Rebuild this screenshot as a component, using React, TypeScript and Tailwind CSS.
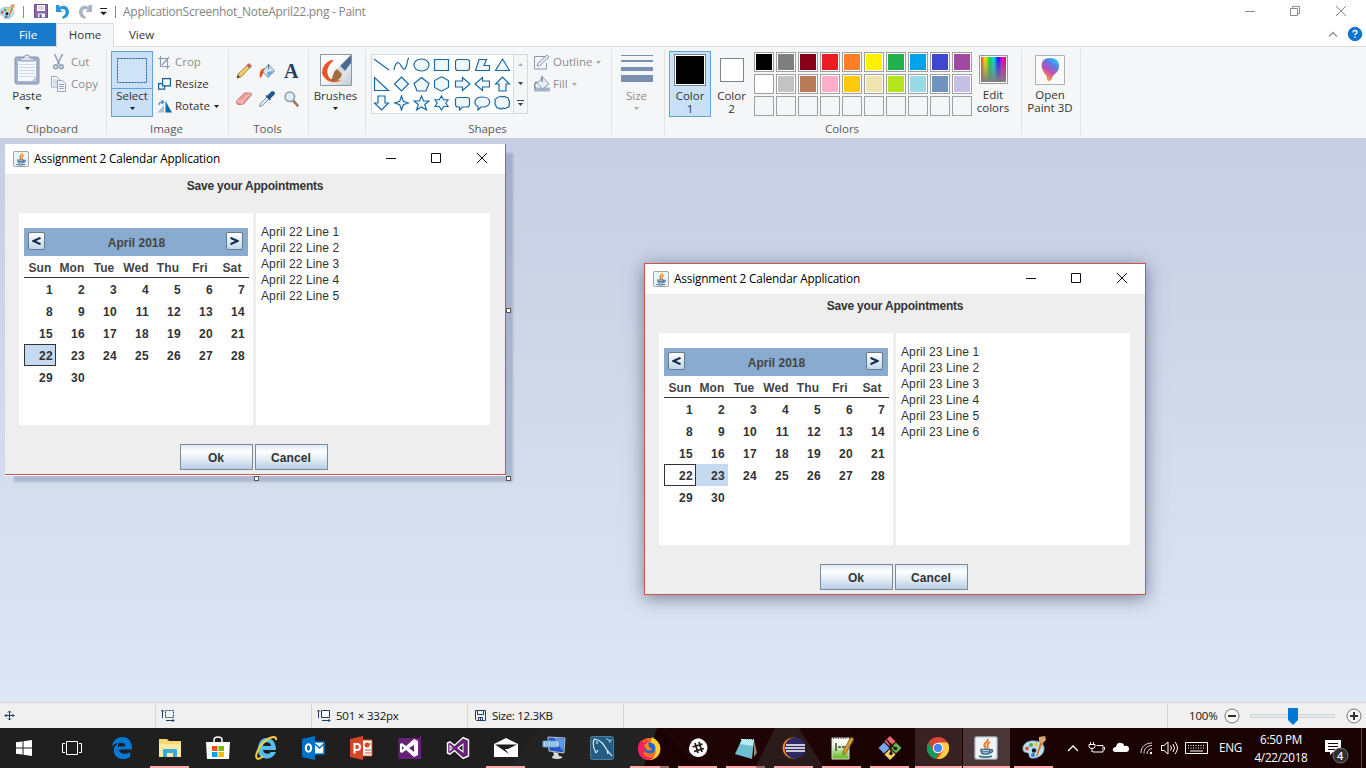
import React from 'react';

type Kids = { children?: React.ReactNode };
const UI = "font-['Open_Sans','Noto_Sans',sans-serif]";

/* ---------- shared bits ---------- */

function Caret({ className = 'fill-[#222]' }: { className?: string }) {
  return (
    <svg width="5" height="3" viewBox="0 0 5 3" className={`block shrink-0 ${className}`}>
      <path d="M0 0h5L2.500 3z" />
    </svg>
  );
}

function PaletteIcon({ size }: { size: number }) {
  return (
    <svg width={size} height={size} viewBox="0 0 24 24">
      <path d="M1 14C0 8 6 4 13 5c6 0 10 4 9 9-1 6-8 9-13 8-3-1-1-4-3-5s-4 0-5-3z" fill="#b9def0" stroke="#6a9fc0" strokeWidth="0.800" />
      <circle cx="5" cy="12.500" r="2" fill="#e1524a" />
      <circle cx="9" cy="9" r="2" fill="#5aa845" />
      <circle cx="14" cy="8.500" r="2" fill="#f1c73c" />
      <circle cx="12" cy="14.500" r="2.200" fill="#1b1b1b" />
      <circle cx="11" cy="19" r="2" fill="#3f76c9" />
      <path d="M20 2l3 1-4 8-4 10-1-1 3-10z" fill="#d07a2b" />
      <path d="M17 1l6-1 1 4-4 4-3-3z" fill="#d9a872" />
    </svg>
  );
}

function JavaIcon({ size }: { size: number }) {
  return (
    <svg width={size} height={size} viewBox="0 0 24 24">
      <rect x="0.700" y="0.700" width="22.600" height="22.600" rx="2" fill="#eef3f6" stroke="#8796a1" strokeWidth="1.300" />
      <path d="M13.500 3c2 3-5 4-3 7 1 1 1 2 1 3M16 6c-4 2-2 4-2.500 7" fill="none" stroke="#e87820" strokeWidth="1.800" />
      <path d="M7 13.500h9c0 3-1 4-2 4.500H9c-1-.5-2-2-2-4.500zM16 14c4-1 3 3-1 3M5 20c3 1.500 10 1.500 13 0" fill="none" stroke="#3f6c90" strokeWidth="1.600" />
      <path d="M8 15.800h7" stroke="#3f6c90" strokeWidth="1.300" />
    </svg>
  );
}

/* ---------- title bar and tabs ---------- */

function TitleBar() {
  return (
    <div className="flex h-[23px] items-center bg-white">
      <div className="-ml-px w-[16px] shrink-0"><PaletteIcon size={16} /></div>
      <div className="ml-[8px] h-[12px] w-px bg-[#888]" />
      <svg className="ml-[10px]" width="15" height="15" viewBox="0 0 15 15">
        <path d="M0.500 0.500h13v13h-13z" fill="#8a69ad" stroke="#654b8c" />
        <path d="M3 1h8v6H3z" fill="#fff" />
        <path d="M4 3h6M4 5h6" stroke="#b9aacb" />
        <path d="M4 9.500h7v4H4z" fill="#f3f0f7" />
        <path d="M5.500 10.500h2v3h-2z" fill="#5d447f" />
      </svg>
      <svg className="ml-[7px]" width="14" height="15" viewBox="0 0 14 15">
        <path d="M0 1h3.500v2c5-3 9.500 0 9.500 5 0 4-3 6-6 7 0-1-.5-1-1-2 2-1 3.500-3 3.500-5 0-3-3-3.500-5-2.500l2 2.500H0z" fill="#2b96d9" />
      </svg>
      <svg className="ml-[8px]" width="14" height="15" viewBox="0 0 14 15">
        <path d="M14 1h-3.500v2C5.500 0 1 3 1 8c0 4 3 6 6 7 0-1 .5-1 1-2-2-1-3.500-3-3.500-5 0-3 3-3.500 5-2.500l-2 2.500H14z" fill="#a8b4c6" />
      </svg>
      <svg className="ml-[8px]" width="7" height="8" viewBox="0 0 7 8">
        <path d="M0 0.500h7" stroke="#222" /><path d="M0.500 4h6L3.500 7z" fill="#222" stroke="#222" strokeWidth="0.500" />
      </svg>
      <div className="ml-[8px] h-[12px] w-px bg-[#888]" />
      <span className="ml-[7px] text-[12px] tracking-[-0.275px] text-[#858585]">ApplicationScreenhot_NoteApril22.png - Paint</span>
      <svg className="ml-auto" width="122" height="22" viewBox="0 0 122 22" fill="none" stroke="#8c8c8c">
        <path d="M1 10.500h10M46.500 7.500h7v7h-7zM48.500 7.500v-2h7v7h-2M92 5l10 10M102 5l-10 10" />
      </svg>
    </div>
  );
}

function Tabs() {
  return (
    <div className="flex h-[24px] border-b border-[#dadbdc] bg-white text-[11.500px]">
      <div className="flex w-[56px] items-center justify-center bg-[#1979ca] text-white">File</div>
      <div className="-mb-px flex w-[58px] items-center justify-center border-x border-t border-[#dadbdc] bg-[#f5f6f7] pb-[2px] text-[#333]">Home</div>
      <div className="flex w-[55px] items-center justify-center text-[#333]">View</div>
      <svg className="ml-auto" width="48" height="23" viewBox="0 0 48 23">
        <path d="M11 13.500l4-4 4 4" fill="none" stroke="#929292" strokeWidth="1.300" />
        <circle cx="37" cy="11" r="6.800" fill="#0b73d3" stroke="#0758a8" strokeWidth="0.700" />
        <path d="M35 9.500q0-2 2-2t2 1.700q0 1-1 1.500t-1 1.600M37 13.600v1.300" fill="none" stroke="#fff" strokeWidth="1.300" />
      </svg>
    </div>
  );
}

/* ---------- ribbon ---------- */

function Group({ label, width, children }: { label?: string; width: string } & Kids) {
  return (
    <div className={`flex shrink-0 ${width}`}>
      <div className="flex min-w-0 flex-1 flex-col">
        <div className="flex h-[74px] pt-[4px]">{children}</div>
        <div className="flex h-[15px] items-center justify-center pr-[2px] text-[11.500px] text-[#5a5a5a]">{label}</div>
      </div>
      <div className="mt-[2px] h-[86px] w-px bg-[#e2e3e4]" />
    </div>
  );
}

function BigLabel({ children, dim }: Kids & { dim?: boolean }) {
  return <span className={`text-[11.500px] leading-[13px] whitespace-nowrap ${dim ? 'text-[#8d8d8d]' : 'text-[#333]'}`}>{children}</span>;
}

function SmallRow({ icon, text, dim, caret, gutter = 'w-[20px]' }: { icon: React.ReactNode; text: string; dim?: boolean; caret?: boolean; gutter?: string }) {
  return (
    <div className="flex h-[22px] items-center">
      <div className={`flex shrink-0 items-center ${gutter}`}>{icon}</div>
      <span className={`text-[11.500px] whitespace-nowrap ${dim ? 'text-[#8d8d8d]' : 'text-[#333]'}`}>{text}</span>
      {caret && <span className="ml-[4px]"><Caret className={dim ? 'fill-[#a9a9a9]' : 'fill-[#222]'} /></span>}
    </div>
  );
}

function Clipboard() {
  return (
    <Group label="Clipboard" width="w-[107px]">
      <div className="ml-[6px] flex w-[42px] flex-col items-center pt-[3px]">
        <svg width="26" height="31" viewBox="0 0 26 31">
          <rect x="1" y="3" width="24" height="27" rx="2" fill="#a4b0c7" stroke="#8795b2" />
          <path d="M4 7h18v20H4z" fill="#f5f8fc" />
          <path d="M5 10.500h16M5 13.500h16M5 16.500h16M5 19.500h16M5 22.500h16" stroke="#cfd9e8" />
          <path d="M18 27l4-5v5z" fill="#c5cede" />
          <path d="M6 7V4h4c0-4 6-4 6 0h4v3z" fill="#d9e0ec" stroke="#8795b2" />
        </svg>
        <div className="mt-[4px] flex h-[13px] items-center"><BigLabel>Paste</BigLabel></div>
        <div className="mt-[5px]"><Caret /></div>
      </div>
      <div className="ml-[3px]">
        <SmallRow dim text="Cut" icon={
          <svg className="ml-[2px]" width="11" height="16" viewBox="0 0 11 16" fill="none" stroke="#97a3bb" strokeWidth="1.700">
            <path d="M1.500 0l5 10.500M9.500 0l-5 10.500" /><circle cx="2.700" cy="12.700" r="1.900" /><circle cx="8.300" cy="12.700" r="1.900" />
          </svg>} />
        <SmallRow dim text="Copy" icon={
          <svg width="16" height="16" viewBox="0 0 16 16" fill="#f1f4f9" stroke="#9aa7c0">
            <path d="M0.500 0.500h5l3 3v7.500h-8z" /><path d="M2 4h4M2 6h4M2 8h4" stroke="#bcc6d8" />
            <path d="M6.500 4.500h5l3 3v8h-8z" /><path d="M8 8.500h5M8 10.500h5M8 12.500h5" />
          </svg>} />
      </div>
    </Group>
  );
}

function ImageGroup() {
  return (
    <Group label="Image" width="w-[122px]">
      <div className="ml-[4px] flex h-[66px] w-[42px] flex-col items-center border border-[#62a2e4] bg-[#c9e0f7]">
        <div className="flex h-[37px] w-full items-center justify-center border-b border-[#62a2e4]">
          <svg width="31" height="25" viewBox="0 0 31 25"><rect x="0.500" y="0.500" width="29" height="24" fill="#cfe3f7" stroke="#1b5b95" strokeDasharray="2 1" /></svg>
        </div>
        <div className="flex h-[13px] items-center"><BigLabel>Select</BigLabel></div>
        <div className="mt-[5px]"><Caret /></div>
      </div>
      <div className="ml-[5px] w-[70px]">
        <SmallRow dim gutter="w-[17px]" text="Crop" icon={
          <svg width="12" height="13" viewBox="0 0 12 13" fill="none" stroke="#8f9bb3" strokeWidth="1.200">
            <path d="M2.500 0v10.500H12M0 2.500h9.500V13M4 9l7-8" />
          </svg>} />
        <SmallRow gutter="w-[17px]" text="Resize" icon={
          <svg width="13" height="12" viewBox="0 0 13 12" fill="#f7fbff" stroke="#155a99" strokeWidth="1.200">
            <path d="M0.600 5.600h6v5.500h-6z" /><path d="M4.600 0.600h7.800v7.300H4.600z" />
          </svg>} />
        <SmallRow gutter="w-[17px]" text="Rotate" caret icon={
          <svg className="-ml-px" width="16" height="13" viewBox="0 0 16 13">
            <path d="M7 5v7.500H0.500z" fill="#b4bfca" /><path d="M8.500 1l6.500 11.500H8.500z" fill="#176a9f" /><path d="M2 5c0-2 1-3 4-3M4.500 0l2 2-2 2" fill="none" stroke="#2b89da" strokeWidth="1.200" />
          </svg>} />
      </div>
    </Group>
  );
}

const tools = [
  <svg key="p" width="16" height="16" viewBox="0 0 16 16"><path d="M1 15l1-4L11.500 2l2.500 2.500L5 14z" fill="#f2cc61" stroke="#8d703a" strokeWidth="0.800" /><path d="M11 2.500L13 0.500l2.500 2.500-2 2z" fill="#d2605c" stroke="#8e3b36" strokeWidth="0.500" /><path d="M1 15l.8-3L4 14z" fill="#333" /></svg>,
  <svg key="b" width="17" height="16" viewBox="0 0 17 16"><path d="M3.500 8.500l6-7 6 6.500-6.500 6.500z" fill="#d3e5f3" stroke="#6f8fae" /><path d="M8 9l7-1-6 6z" fill="#6fa6d4" /><path d="M9.500 1v5" stroke="#577" /><path d="M1 15C0 10 1 6 6 5 4 8 4.500 11 2.500 14z" fill="#e9571c" /></svg>,
  <span key="a" className="font-['Liberation_Serif',serif] text-[20px] leading-[16px] font-bold text-[#1f3d64]">A</span>,
  <svg key="e" width="16" height="14" viewBox="0 0 16 14"><path d="M0.500 9l8-8q1-.6 2 0h4.500q.8.500 0 2.500l-8 9H2.500q-2 0-2-3.500z" fill="#ef9d98" stroke="#b9605c" strokeWidth="0.800" /><path d="M0.500 9h5.500l9-8.500M6 9v4" fill="none" stroke="#fbd2cf" /></svg>,
  <svg key="d" width="16" height="16" viewBox="0 0 16 16"><path d="M0.500 15.500l1-3L8 6l2 2-6.500 6.500z" fill="#d9ebf7" stroke="#63829c" strokeWidth="0.800" /><path d="M7 4.500L11.500 9M9 5l4-4q2.500-.5 2 2l-4 4z" fill="#24659c" stroke="#1f4f80" strokeWidth="1.500" /></svg>,
  <svg key="z" width="15" height="16" viewBox="0 0 15 16"><path d="M9.500 10l4 4.500" stroke="#9c7149" strokeWidth="2.600" strokeLinecap="round" /><circle cx="5.800" cy="5.800" r="4.800" fill="#dcecf7" stroke="#8b9ba8" strokeWidth="1.500" /></svg>,
];

function ToolsGroup() {
  return (
    <Group label="Tools" width="w-[80px]">
      <div className="ml-[3px] grid h-[62px] w-[71px] grid-cols-3 grid-rows-[28px_28px] items-center justify-items-center pt-[6px]">
        {tools.map((t, i) => <div key={i} className="flex items-center justify-center">{t}</div>)}
      </div>
    </Group>
  );
}

function BrushesGroup() {
  return (
    <Group width="w-[57px]">
      <div className="flex w-[53px] flex-col items-center pt-[3px]">
        <svg width="32" height="32" viewBox="0 0 32 32">
          <defs><linearGradient id="brushbg" x2="1" y2="1"><stop offset="0.400" stopColor="#fdfdfd" /><stop offset="1" stopColor="#bfcbd0" /></linearGradient></defs>
          <path d="M0.500 0.500h31v31H0.500z" fill="url(#brushbg)" stroke="#8c969b" />
          <path d="M14 6C8 5 2 12 2 19c2 8 12 12 19 7-6 1-12 0-13-5C6 15 9 11 14 6z" fill="#e95525" />
          <path d="M31 1v8l-6 8-5-5z" fill="#4b6b96" /><path d="M25 17l-5-5-3 3 4 5z" fill="#d5dbe1" />
          <path d="M17 15l5 5c-1 5-5 8-12 7 4-3 2-9 7-12z" fill="#a46d39" />
        </svg>
        <div className="mt-[3px] flex h-[13px] items-center"><BigLabel>Brushes</BigLabel></div>
        <div className="mt-[5px]"><Caret /></div>
      </div>
    </Group>
  );
}

const shapes = [
  'M1 2l15 11', 'M1 13C2 6 5 4 7 7s4 8 6 3 1-8 3-9', 'M8.500 2c10 0 10 12 0 12s-10-12 0-12z', 'M1.500 2.500h14v11h-14z', 'M4 2.500h9q2.500 0 2.500 2.500v6q0 2.500-2.500 2.500H4Q1.500 13.500 1.500 11V5Q1.500 2.500 4 2.500z', 'M5 2.500h7.500L10 8.500h5.500v5h-14z', 'M8.500 2l7 11.500h-14z',
  'M1.500 1.500v13h14z', 'M8.500 1l7 7-7 7-7-7z', 'M8.500 1.500l7.500 6-3 7.500H4L1 7.500z', 'M8.500 0.800l7 3.700v7l-7 3.700-7-3.700v-7z', 'M1.500 5h7V1.500L16 8l-7.500 6.500V11h-7z', 'M15.500 5h-7V1.500L1 8l7.500 6.500V11h7z', 'M5 15V8H1.500L8.500 1l7 7H12v7z',
  'M5 1v7H1.500l7 7 7-7H12V1z', 'M8.500 1l1.800 5.200L15.500 8l-5.200 1.800L8.500 15l-1.800-5.200L1.500 8l5.200-1.800z', 'M8.500 1l2 5h5.500l-4.300 3.500L13.500 15l-5-3-5 3 1.800-5.500L1 6h5.500z', 'M8.500 1l2.200 3.700H15L12.800 8l2.200 3.500h-4.300L8.500 15l-2.200-3.500H2L4.200 8 2 4.700h4.300z', 'M4 2.500h9q2.500 0 2.500 2v5q0 2.500-2.500 2.500H8.500l-3 3v-3H4q-2.500 0-2.500-2.500v-5q0-2 2.500-2z', 'M8.500 2c9.500 0 9.500 10 0 10H7l-3 3v-3.500C-1 9 0 2 8.500 2z', 'M5 2q1.500-1.500 3.500 0 2-1.500 3.500.5 3-.5 2.500 2.500 2 2 .5 4 1 3-2 3.500-1.500 2-4 .5-2 2-4 0-3 .5-3-2.500-2-1.500-.5-3.500Q0 4 2.500 3.500 3 2 5 2z',
];

function ShapesGroup() {
  return (
    <Group label="Shapes" width="w-[246px]">
      <div className="mt-[3px] ml-[5px] flex h-[60px] w-[157px] shrink-0 border border-[#d5d9de] bg-white">
        <div className="grid w-[141px] grid-cols-7 grid-rows-3 items-center justify-items-center">
          {shapes.map((d, i) => (
            <svg key={i} className="relative -left-[0.500px]" width="17" height="16" viewBox="0 0 17 16"><path d={d} fill={i < 2 ? 'none' : '#eef7fa'} stroke="#1a66a4" strokeWidth="1.150" /></svg>
          ))}
        </div>
        <div className="flex w-[14px] flex-col border-l border-[#d5d9de] bg-[#f5f6f7]">
          <div className="flex flex-1 items-center justify-center"><svg width="5" height="3" viewBox="0 0 5 3"><path d="M0 3h5L2.500 0z" fill="#adb1b7" /></svg></div>
          <div className="flex flex-1 items-center justify-center"><Caret className="fill-[#33415b]" /></div>
          <div className="flex flex-1 flex-col items-center justify-center gap-[2px]"><div className="h-px w-[7px] bg-[#33415b]" /><Caret className="fill-[#33415b]" /></div>
        </div>
      </div>
      <div className="ml-[6px]">
        <SmallRow dim caret gutter="w-[19px]" text="Outline" icon={
          <svg width="17" height="16" viewBox="0 0 17 16" fill="none" stroke="#8998b3"><path d="M12 2.500H0.500v12.500h12V9" /><path d="M3 12l1-3 9-8 2 2-9 8.500z" fill="#e5eaf3" /></svg>} />
        <SmallRow dim caret gutter="w-[19px]" text="Fill" icon={
          <svg width="17" height="16" viewBox="0 0 17 16"><path d="M0 11.500h16V15.500H0z" fill="#a5b2cb" /><path d="M3 7l6-5.500L15 8l-6.500 5z" fill="#e6ebf4" stroke="#8998b3" /><path d="M8 0v6M3 6C0 7 0 11 2 12" fill="none" stroke="#7c8cab" strokeWidth="1.500" /></svg>} />
      </div>
    </Group>
  );
}

function SizeGroup() {
  return (
    <Group width="w-[53px]">
      <div className="flex w-full flex-col items-center pt-[4px] pr-[3px]">
        <div className="h-px w-[32px] bg-[#7b8fb2]" />
        <div className="mt-[4px] h-[2px] w-[32px] bg-[#7b8fb2]" />
        <div className="mt-[5px] h-[4px] w-[32px] bg-[#7b8fb2]" />
        <div className="mt-[4px] h-[7px] w-[32px] bg-[#7b8fb2]" />
        <div className="mt-[7px] flex h-[13px] items-center"><BigLabel dim>Size</BigLabel></div>
        <div className="mt-[5px]"><Caret className="fill-[#a9a9a9]" /></div>
      </div>
    </Group>
  );
}

const palette = [
  'bg-[#000000]', 'bg-[#7f7f7f]', 'bg-[#880015]', 'bg-[#ed1c24]', 'bg-[#ff7f27]', 'bg-[#fff200]', 'bg-[#22b14c]', 'bg-[#00a2e8]', 'bg-[#3f48cc]', 'bg-[#a349a4]',
  'bg-[#ffffff]', 'bg-[#c3c3c3]', 'bg-[#b97a57]', 'bg-[#ffaec9]', 'bg-[#ffc90e]', 'bg-[#efe4b0]', 'bg-[#b5e61d]', 'bg-[#99d9ea]', 'bg-[#7092be]', 'bg-[#c8bfe7]',
  '', '', '', '', '', '', '', '', '', '',
];

function ColorsGroup() {
  return (
    <Group label="Colors" width="w-[357px]">
      <div className="ml-[4px] flex h-[66px] w-[42px] shrink-0 flex-col items-center border border-[#62a2e4] bg-[#c9e0f7] pt-[2px]">
        <div className="h-[32px] w-[32px] border border-[#7d8389] bg-white p-px"><div className="h-full w-full bg-black" /></div>
        <div className="mt-[3px] flex flex-col items-center"><BigLabel>Color</BigLabel><BigLabel>1</BigLabel></div>
      </div>
      <div className="flex w-[41px] shrink-0 flex-col items-center pt-[7px]">
        <div className="h-[24px] w-[24px] border border-[#7d8389] bg-white" />
        <div className="mt-[7px] flex flex-col items-center"><BigLabel>Color</BigLabel><BigLabel>2</BigLabel></div>
      </div>
      <div className="mt-px ml-[2px] grid h-[64px] shrink-0 grid-cols-10 gap-[2px]">
        {palette.map((c, i) => (
          <div key={i} className={`h-[20px] w-[20px] border border-[#a0a0a0] p-px ${c ? 'bg-white' : ''}`}><div className={`h-full w-full ${c}`} /></div>
        ))}
      </div>
      <div className="flex w-[42px] flex-col items-center pt-[4px]">
        <svg width="29" height="29" viewBox="0 0 29 29">
          <defs>
            <linearGradient id="spectrum"><stop stopColor="#f33" /><stop offset="0.170" stopColor="#fe0" /><stop offset="0.350" stopColor="#0d3" /><stop offset="0.520" stopColor="#0de" /><stop offset="0.680" stopColor="#11f" /><stop offset="0.850" stopColor="#e0e" /><stop offset="1" stopColor="#f02" /></linearGradient>
            <linearGradient id="fadeGray" x2="0" y2="1"><stop stopColor="#808080" stopOpacity="0" /><stop offset="1" stopColor="#808080" /></linearGradient>
          </defs>
          <path d="M0.500 0.500h28v28H0.500z" fill="#fff" stroke="#999" /><path d="M2 2h25v25H2z" fill="url(#spectrum)" /><path d="M2 2h25v25H2z" fill="url(#fadeGray)" />
        </svg>
        <div className="mt-[4px] flex flex-col items-center"><BigLabel>Edit</BigLabel><BigLabel>colors</BigLabel></div>
      </div>
    </Group>
  );
}

function Paint3DGroup() {
  return (
    <Group width="w-[59px]">
      <div className="flex w-[56px] flex-col items-center pt-[4px]">
        <svg width="30" height="30" viewBox="0 0 30 30">
          <defs><linearGradient id="p3d" x1="0.800" x2="0.200" y2="1"><stop stopColor="#24d6f4" /><stop offset="0.300" stopColor="#5a7ae9" /><stop offset="0.600" stopColor="#d14da5" /><stop offset="1" stopColor="#ffc021" /></linearGradient></defs>
          <path d="M0.500 0.500h29v29H0.500z" fill="#fafafa" stroke="#b0b0b0" />
          <path d="M15 3c10 0 11 9 7 14-3 3-4 3-5 6-1 4-5 4-5 1 0-4-2-4-4-8C5 9 7 3 15 3z" fill="url(#p3d)" />
          <path d="M9 7c1 4 4 7 9 9-4 1-8-1-10-4z" fill="#9b57e5" opacity="0.600" />
        </svg>
        <div className="mt-[3px] flex flex-col items-center"><BigLabel>Open</BigLabel><BigLabel>Paint 3D</BigLabel></div>
      </div>
    </Group>
  );
}

/* ---------- calendar window ---------- */

const weekdays = ['Sun', 'Mon', 'Tue', 'Wed', 'Thu', 'Fri', 'Sat'];

function NavButton({ flip }: { flip?: boolean }) {
  return (
    <div className="flex h-[18px] w-[17px] items-center justify-center rounded-[2px] border border-[#66798b] bg-linear-to-b from-white to-[#c2d6e8]">
      <svg className={flip ? '-scale-x-100' : ''} width="9" height="8" viewBox="0 0 9 8">
        <path d="M8.500 0.800L1.500 4l7 3.200" fill="none" stroke="#0d2c4e" strokeWidth="2" />
      </svg>
    </div>
  );
}

function JavaButton({ children }: Kids) {
  return (
    <div className="flex h-[26px] w-[73px] items-center justify-center border border-[#7a8a99] bg-linear-to-b from-[#dfeaf4] via-white via-30% to-[#b8cfe5] pt-[2px] pr-px text-[12px] font-bold tracking-[0.100px] text-[#333]">{children}</div>
  );
}

function CalendarWindow({ selected, lines }: { selected: number; lines: string[] }) {
  return (
    <div className="flex h-[330px] w-[500px] flex-col bg-[#eeeeee] font-['Liberation_Sans',Arial,sans-serif]">
      <div className={`flex h-[30px] shrink-0 items-center bg-white pl-[8px] ${UI}`}>
        <JavaIcon size={16} />
        <span className="ml-[5px] text-[11.800px] tracking-[-0.160px] whitespace-nowrap text-black">Assignment 2 Calendar Application</span>
        <svg className="ml-auto" width="124" height="30" viewBox="0 0 124 30" fill="none" stroke="#111">
          <path d="M5 14.500h10M50.500 9.500h9v9h-9zM96 9l10 10M106 9l-10 10" />
        </svg>
      </div>
      <div className="flex h-[39px] items-start justify-center pt-[3px] text-[12px] leading-[18px] font-bold tracking-[-0.190px] text-[#333]">Save your Appointments</div>
      <div className="flex h-[212px] gap-[3px] pl-[14px]">
        <div className="w-[234px] bg-white pt-[15px] pl-[5px]">
          <div className="flex h-[28px] w-[224px] items-center justify-between bg-[#8aabd0] pr-[5px] pb-[2px] pl-[4px]">
            <NavButton />
            <span className="pt-[3px] pl-[2px] text-[12px] font-bold text-[#444]">April 2018</span>
            <NavButton flip />
          </div>
          <div className="grid h-[22px] w-[225px] grid-cols-[repeat(7,32px)] items-center border-b border-[#333] text-center text-[12px] leading-[20px] font-bold tracking-[0.100px] text-[#444]">
            {weekdays.map((d) => <span key={d} className="pt-[2px]">{d}</span>)}
          </div>
          <div className="grid w-[224px] grid-cols-7 text-right text-[12px] leading-[22px] font-bold tracking-[0.300px] text-[#333]">
            {Array.from({ length: 30 }, (_, i) => i + 1).map((n) => (
              <span key={n} className={`h-[22px] pt-px pr-[3px] ${n === selected ? 'bg-[#c3daf0]' : ''} ${n === 22 ? 'outline outline-1 -outline-offset-1 outline-[#333]' : ''}`}>{n}</span>
            ))}
          </div>
        </div>
        <div className="w-[234px] bg-white pt-[11px] pl-[5px] text-[12px] leading-[16px] tracking-[0.100px] text-[#333]">
          {lines.map((l) => <div key={l}>{l}</div>)}
        </div>
      </div>
      <div className="flex gap-[2px] pt-[19px] pl-[175px]">
        <JavaButton>Ok</JavaButton>
        <JavaButton>Cancel</JavaButton>
      </div>
    </div>
  );
}

function Handle({ className }: { className: string }) {
  return <div className={`absolute h-[5px] w-[5px] border border-[#555] bg-white ${className}`} />;
}

/* ---------- status bar ---------- */

function StatusCell({ width, children }: { width: string } & Kids) {
  return <div className={`flex h-[24px] shrink-0 items-center border-r border-[#d7d7d7] ${width}`}>{children}</div>;
}

function StatusBar() {
  return (
    <div className="flex h-[26px] items-center border-t border-[#d2d5da] bg-[#f0f0f0] text-[11.500px] text-[#111]">
      <StatusCell width="w-[156px]">
        <svg className="ml-[4px]" width="12" height="12" viewBox="0 0 12 12" fill="none" stroke="#1e3c64"><path d="M5.500 1v9M1 5.500h9M4 2.500L5.500 1 7 2.500M4 8.500L5.500 10 7 8.500M2.500 4L1 5.500 2.500 7M8.500 4L10 5.500 8.500 7" /></svg>
      </StatusCell>
      <StatusCell width="w-[156px]">
        <svg className="ml-[5px]" width="14" height="13" viewBox="0 0 14 13" fill="none" stroke="#1e3c64"><path d="M4.500 1.500h8v7h-8z" strokeDasharray="2 1" /><path d="M1.500 9V1M0 2.500L1.500 1 3 2.500M5 11.500h8M11.500 10l1.500 1.500-1.500 1.500" /></svg>
      </StatusCell>
      <StatusCell width="w-[156px]">
        <svg className="ml-[5px]" width="14" height="13" viewBox="0 0 14 13" fill="none" stroke="#1e3c64"><path d="M4.500 1.500h8v7h-8z" fill="#fff" /><path d="M1.500 9V1M0 2.500L1.500 1 3 2.500M5 11.500h8M11.500 10l1.500 1.500-1.500 1.500" /></svg>
        <span className="ml-[5px] tracking-[-0.220px]">501 × 332px</span>
      </StatusCell>
      <StatusCell width="w-[156px]">
        <svg className="ml-[7px]" width="11" height="11" viewBox="0 0 11 11" fill="none" stroke="#1e3c64"><path d="M0.500 0.500h10v10h-9l-1-1zM2.500 0.500v4h6v-4M3.500 10.500v-3h4v3M5.500 8v2" /></svg>
        <span className="ml-[6px] tracking-[-0.300px]">Size: 12.3KB</span>
      </StatusCell>
      <StatusCell width="w-[544px]" />
      <span className="ml-[21px] w-[35px] tracking-[-0.200px]">100%</span>
      <svg width="142" height="24" viewBox="0 0 142 24">
        <circle cx="8" cy="12" r="7" fill="#f5f5f5" stroke="#777" /><path d="M4 12h8" stroke="#333" strokeWidth="2" />
        <path d="M26.500 10.500h84v3h-84z" fill="#e7eaea" stroke="#d3d6d6" /><path d="M64 4h10v12l-5 5-5-5z" fill="#0078d7" />
        <circle cx="130" cy="12" r="7" fill="#f5f5f5" stroke="#777" /><path d="M126 12h8M130 8v8" stroke="#333" strokeWidth="2" />
      </svg>
    </div>
  );
}

/* ---------- taskbar ---------- */

const eShape = 'M1 10C2 3 7 0 12 0c6 0 10 5 10 11v2H8c0 4 7 6 12 3v5C12 26 2 22 3 13c0-3 3-6 6-7-1 1-2 2-2 4h8c0-3-2-4-4-4-4 0-8 1-10 4z';

function VsIcon({ outline }: { outline?: boolean }) {
  if (outline) {
    return (
      <svg width="24" height="24" viewBox="0 0 24 24">
        <path d="M17 0.800l6.200 2.700v17L17 23.200 8.500 15.500 4 19 .8 17.500v-11L4 5l4.500 3.500z" fill="#fff" />
        <path d="M17 2.500l4.800 2v15L17 21.500 8.500 13.700 4 17.200 2.200 16.300V7.700L4 6.800l4.500 3.500z" fill="#68217a" />
        <path d="M3.500 8.500v7L7 12zM17.500 7l-6.500 5 6.500 5z" fill="#fff" />
        <path d="M4.600 10.800v2.400L5.800 12zM16.500 9.300L13 12l3.500 2.700z" fill="#1f1f1f" />
      </svg>
    );
  }
  return (
    <svg width="24" height="24" viewBox="0 0 24 24">
      <path d="M0.500 2H22V0h1v23H0.500z" fill="#68217a" />
      <path d="M2 8l2-1 4 3 8-7 4 2v14l-4 2-8-7-4 3-2-1zm2 2v4l2-2zm12-1l-5 3 5 4z" fill="#fff" fillRule="evenodd" />
    </svg>
  );
}

const apps: { icon: React.ReactNode; bar?: 'one' | 'many' | 'full'; on?: string }[] = [
  { icon: <svg width="22" height="22" viewBox="0 0 23 23"><path d={eShape} fill="#0078d7" /></svg> },
  { bar: 'one', icon: <svg width="22" height="20" viewBox="0 0 22 20"><path d="M0 1h8l2 2h12v16H0z" fill="#f8d775" /><path d="M0 6h22v13H0z" fill="#fde9a0" /><path d="M4 19v-7q0-1 1-1h12q1 0 1 1v7h-4v-4H8v4z" fill="#38a8df" /></svg> },
  { icon: <svg width="24" height="24" viewBox="0 0 24 24"><path d="M8 7V4q0-3 4-3t4 3v3" fill="none" stroke="#fff" strokeWidth="1.500" /><path d="M0 6h24l-1 17H1z" fill="#fff" /><path d="M6 10h5.500v5H6z" fill="#f25022" /><path d="M12.500 10H18v5h-5.500z" fill="#7fba00" /><path d="M6 16h5.500v5H6z" fill="#00a4ef" /><path d="M12.500 16H18v5h-5.500z" fill="#ffb900" /></svg> },
  { icon: <svg width="24" height="24" viewBox="0 0 24 24"><path d="M12 2c7 0 10 5 10 12H9c0 4 6 5 8 2h5c-4 10-18 8-18-2C4 7 7 2 12 2zM9 10h8c0-5-8-5-8 0z" fill="#54bff0" fillRule="evenodd" /><path d="M22 4c1-6-9-2-14 4S0 22 4 23c2 0 4-2 5-3" fill="none" stroke="#f6cc3a" strokeWidth="2" /></svg> },
  { icon: <svg width="23" height="24" viewBox="0 0 23 24"><path d="M12 6h10v12H12z" fill="#fff" stroke="#0072c6" strokeWidth="1.500" /><path d="M13 8l4.500 4L22 8" fill="none" stroke="#0072c6" strokeWidth="1.500" /><path d="M0 3l13-3v24L0 21z" fill="#0072c6" /><ellipse cx="6.500" cy="12" rx="2.700" ry="3.700" fill="none" stroke="#fff" strokeWidth="2" /></svg> },
  { icon: <svg width="23" height="24" viewBox="0 0 23 24"><path d="M12 4h10v16H12z" fill="#fff" stroke="#d24726" /><path d="M15 14h6M15 17h6M15 8h6" stroke="#d24726" /><circle cx="17" cy="9" r="2.500" fill="#d24726" /><path d="M0 3l13-3v24L0 21z" fill="#d24726" /><path d="M4.500 17.500V8h2.500q3 0 3 3t-3 3H5" fill="none" stroke="#fff" strokeWidth="2" /></svg> },
  { icon: <VsIcon /> },
  { icon: <VsIcon outline /> },
  { bar: 'one', icon: <svg width="24" height="20" viewBox="0 0 24 20"><path d="M0 6l12-6 12 6v13H0z" fill="#fff" /><path d="M1 6.500h22L14 11l-3 0 4 5z" fill="#1d1d1d" /></svg> },
  { icon: <svg width="24" height="24" viewBox="0 0 24 24"><path d="M6 1l17 1-1 15-15-2z" fill="#2456c9" stroke="#bcc7d2" /><path d="M12 2l10 1-1 12z" fill="#5f9af1" /><path d="M1 5h16v6H1z" fill="#bfe1f5" stroke="#4c91c9" /><path d="M3 7h12M3 9h12" stroke="#347bc0" strokeDasharray="1.500 1" /><path d="M11 16l5 1 1 3q4 0 3 2-5 2-10 0 0-2 2-3z" fill="#d6dade" /></svg> },
  { icon: <svg width="24" height="24" viewBox="0 0 24 24"><rect x="0.500" y="0.500" width="23" height="23" rx="2" fill="#235d83" stroke="#487d9b" /><path d="M6 17C2 10 3 4 5 3c6 1 9 6 12 11l5 6M6 17l2-3M17 14l1 4M7 5v3" fill="none" stroke="#e8f4f9" strokeWidth="1.100" /><path d="M16 3c3 0 3 1 4 4M19 5l3-1" stroke="#b7d7e5" fill="none" /></svg> },
  { bar: 'many', icon: <svg width="23" height="23" viewBox="0 0 23 23"><circle cx="11.500" cy="12" r="11" fill="#ff6a22" /><path d="M14 0c5 3 9 7 8 14-1 5-5 8-10 9 9-7 6-12 0-15z" fill="#ffcf2d" /><path d="M0 13C0 6 2 5 3 3l3 3 3-4c-1 4 2 6 4 8l-8 6c2 5 8 5 12 4-9 6-16 1-17-7z" fill="#ed235e" /><circle cx="12" cy="11" r="5.500" fill="#2368cb" /><path d="M6 8l4-3 1 5 3 2c-2 3-5 1-6 0z" fill="#fb8a20" /></svg> },
  { bar: 'one', icon: <svg width="20" height="20" viewBox="0 0 20 20"><path d="M4 3Q10-2 15 2q7 5 3 13-5 6-12 3Q-3 13 4 3z" fill="#fff" /><path d="M7 5l3 10M11 4l3 10M4.500 9l10-3M6 13.500l10-3" stroke="#241a1b" strokeWidth="1.800" /></svg> },
  { bar: 'many', icon: <svg width="23" height="23" viewBox="0 0 23 23"><path d="M20 3l3 13-3 4z" fill="#9a8558" /><path d="M8 2l12 1-2 19L1 17z" fill="#6dbed0" /><path d="M8 2l12 1-1 6L6 7z" fill="#b8e9ef" /><path d="M7 2.500h13" stroke="#d9f2f5" strokeDasharray="1 1" /></svg> },
  { bar: 'one', icon: <svg width="24" height="22" viewBox="0 0 24 22"><circle cx="11" cy="11" r="10.500" fill="#f1892b" /><circle cx="13" cy="11" r="10.500" fill="#302765" /><path d="M4 8h19M3 11h20M4 14h19" stroke="#fff" strokeWidth="1.700" /></svg> },
  { bar: 'one', icon: <svg width="24" height="24" viewBox="0 0 24 24"><defs><linearGradient id="npp" x2="0" y2="1"><stop offset="0.300" stopColor="#f7fcef" /><stop offset="1" stopColor="#5eb615" /></linearGradient></defs><path d="M2 2h17v21H2z" fill="url(#npp)" stroke="#ddd" /><path d="M3 2h15" stroke="#555" strokeWidth="2" strokeDasharray="1 1.500" /><path d="M6 7v8M8 11h3M12 11h3" stroke="#444" strokeWidth="1.500" /><path d="M21 1l3 2-8 14-3 2v-4z" fill="#d69d2c" stroke="#6f4d18" strokeWidth="0.700" /></svg> },
  { bar: 'one', icon: <svg width="24" height="24" viewBox="0 0 24 24"><path d="M12 0l5.500 5.500L12 11 6.500 5.500z" fill="#ee6671" /><path d="M6 6.500l5.500 5.500L6 17.500.5 12z" fill="#76a7ed" /><path d="M18 6.500l5.500 5.500-5.500 5.500-5.500-5.500z" fill="#68b652" /><path d="M12 13l5.500 5.500L12 24l-5.500-5.500z" fill="#f0d46b" /><path d="M9 4l4 5v9M13 9l5 4" fill="none" stroke="#211917" strokeWidth="1.500" /><circle cx="13" cy="9" r="1.800" fill="#211917" /><circle cx="13" cy="17.500" r="1.800" fill="#211917" /><circle cx="17.500" cy="12.500" r="1.800" fill="#211917" /></svg> },
  { bar: 'full', on: 'bg-[#382122]', icon: <svg width="22" height="22" viewBox="0 0 22 22"><circle cx="11" cy="11" r="11" fill="#db4437" /><path d="M1.500 5.500L7 15l4 1.500L9 22A11 11 0 011.500 5.500z" fill="#0f9d58" /><path d="M11 5.500h9.500A11 11 0 0110 22l6-8z" fill="#ffcd40" /><circle cx="11" cy="11" r="5.200" fill="#fff" /><circle cx="11" cy="11" r="4.200" fill="#4285f4" /></svg> },
  { bar: 'full', on: 'bg-[#4c3738]', icon: <JavaIcon size={24} /> },
  { bar: 'one', icon: <PaletteIcon size={24} /> },
];

function TaskCell({ app }: { app: (typeof apps)[number] }) {
  return (
    <div className={`flex h-[40px] w-[48px] shrink-0 flex-col items-center border-l border-transparent bg-clip-padding ${app.on ?? ''}`}>
      <div className="flex h-[38px] items-center justify-center pt-[2px] pr-[2px]">{app.icon}</div>
      {app.bar === 'one' && <div className="mr-[2px] h-[2px] w-[39px] bg-[#f9a9aa]" />}
      {app.bar === 'full' && <div className="h-[2px] w-[47px] bg-[#f9a9aa]" />}
      {app.bar === 'many' && <div className="mr-[2px] flex h-[2px] w-[39px] bg-[#f9a9aa]"><div className="ml-auto w-[9px] bg-[#9e6e6f]" /></div>}
    </div>
  );
}

function Taskbar() {
  return (
    <div className="relative flex h-[40px] bg-[#1a0203] text-white">
      <svg className="absolute inset-0" width="1366" height="40" viewBox="0 0 1366 40">
        <path d="M0 0h657l-14 40H0z" fill="#1f1f1f" /><path d="M510 40L540 0h117l-14 40z" fill="#242323" /><path d="M660 0h190v40H700z" fill="#1f0406" /><path d="M755 40L775 0h24l25 40z" fill="#2b1b1b" />
      </svg>
      <div className="relative flex h-[40px] w-full">
        <div className="flex w-[48px] items-center justify-center">
          <svg width="16" height="16" viewBox="0 0 16 16" fill="#fff"><path d="M0 2.300l6.500-.9v6.100H0zM7.500 1.200L16 0v7.500H7.500zM0 8.500h6.500v6.100L0 13.700zM7.500 8.500H16V16l-8.500-1.200z" /></svg>
        </div>
        <div className="mr-[2px] flex w-[48px] items-center justify-center">
          <svg width="20" height="14" viewBox="0 0 20 14" fill="none" stroke="#fff"><path d="M4.500 0.500h11v13h-11zM3 2.500H0.500v9H3M17 2.500h2.500v9H17" /></svg>
        </div>
        {apps.map((a, i) => <TaskCell key={i} app={a} />)}
        <div className="ml-auto flex items-center">
          <svg className="mr-[3px]" width="150" height="40" viewBox="1061 728 150 40" fill="none" stroke="#fff">
            <path d="M1068 751l5-5 5 5" strokeWidth="1.300" />
            <path d="M1096.500 745.500h6.500v6.500h-10v-1M1104.500 747v3M1090.500 742v2M1093.500 742v2M1089 744.500h6v2q0 2-3 2t-3-2zM1092 749v3" />
            <path d="M1116 752h-1q-3-1-2-3.500 1-2 3-1.500 1-5 5-4 3 0 3 3 5-1 5 3 0 3-3 3z" fill="#fff" stroke="none" />
            <path d="M1141 753c0-6 4-10 11-10M1144 753.500c0-5 3-8 8-8M1147 754c0-3 2-5 5-5.500" stroke="#ddd" /><circle cx="1151" cy="753" r="1.200" fill="#fff" stroke="none" />
            <path d="M1161.500 745.500h2.500l4-3.500v12l-4-3.500h-2.500zM1170.500 745.500q2 2.500 0 5M1173 744q3 4 0 8M1175 742q5 6 0 12" />
            <path d="M1185.500 742.500h22v11h-22z" /><path d="M1188 745.500h17M1188 748h17" strokeDasharray="1 1.500" /><path d="M1190 751h13" />
          </svg>
          <div className="w-[33px] text-center text-[11.700px] tracking-[-0.200px]">ENG</div>
          <div className="w-[68px] text-center text-[11.700px] leading-[18px] tracking-[-0.250px]"><div>6:50 PM</div><div>4/22/2018</div></div>
          <div className="relative h-[40px] w-[46px]">
            <svg className="absolute top-0 left-[8px]" width="30" height="40" viewBox="1323 728 30 40">
              <path d="M1325 740h16v12h-8l-3 3v-3h-5z" fill="#fff" /><path d="M1328 743.500h10M1328 746.500h10M1328 749.500h7" stroke="#190303" />
              <circle cx="1340.500" cy="755.500" r="7.500" fill="#302e2f" stroke="#777" />
            </svg>
            <span className="absolute top-[20px] left-[22px] text-[11px] leading-[15px] font-semibold">4</span>
          </div>
          <div className="mr-[4px] h-[40px] w-px bg-[#5b4849]" />
        </div>
      </div>
    </div>
  );
}

export default function App() {
  return (
    <div className={`flex h-[768px] w-[1366px] flex-col overflow-hidden bg-white ${UI}`}>
      <TitleBar />
      <Tabs />
      <div className="flex h-[92px] shrink-0 border-b border-[#c8cbd8] bg-[#f5f6f7]">
        <Clipboard />
        <ImageGroup />
        <ToolsGroup />
        <BrushesGroup />
        <ShapesGroup />
        <SizeGroup />
        <ColorsGroup />
        <Paint3DGroup />
      </div>
      <div className="relative h-[563px] shrink-0 overflow-hidden bg-linear-to-b from-[#c5cfe1] to-[#dce6f4]">
        <div className="absolute top-[5px] left-[5px] border-r border-b border-[#d2504f] shadow-[0_1px_0_white,8px_8px_2px_-1px_rgba(80,100,135,0.3)]">
          <CalendarWindow selected={22} lines={[1, 2, 3, 4, 5].map((n) => `April 22 Line ${n}`)} />
        </div>
        <Handle className="top-[169px] left-[506px]" />
        <Handle className="top-[337px] left-[254px]" />
        <Handle className="top-[337px] left-[506px]" />
        <div className="absolute top-[124px] left-[644px] border border-[#d2504f] shadow-[0_3px_16px_rgba(30,35,60,0.5)]">
          <CalendarWindow selected={23} lines={[1, 2, 3, 4, 5, 6].map((n) => `April 23 Line ${n}`)} />
        </div>
      </div>
      <StatusBar />
      <Taskbar />
    </div>
  );
}
